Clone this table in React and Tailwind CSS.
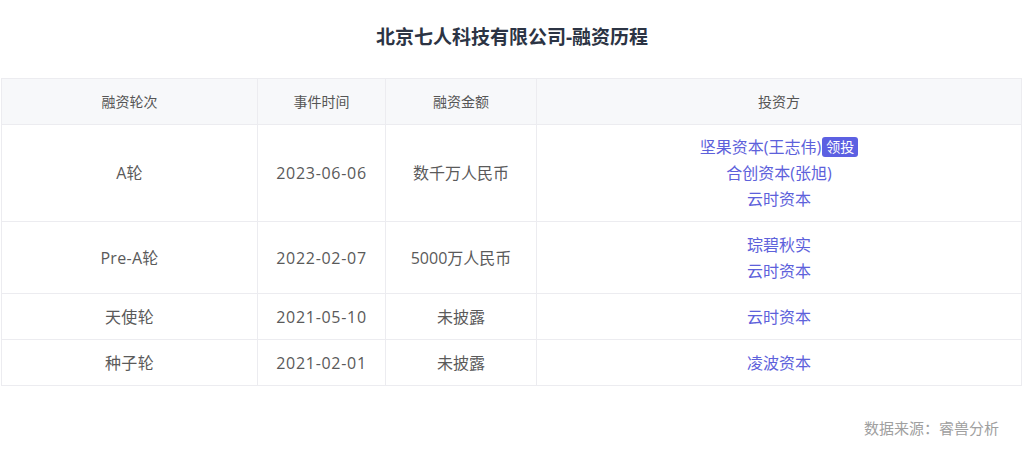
import React from "react";

const ROWS = [
  {
    round: "A轮",
    date: "2023-06-06",
    amount: "数千万人民币",
    h: "h-[97px]",
    investors: [
      { name: "坚果资本(王志伟)", lead: true },
      { name: "合创资本(张旭)" },
      { name: "云时资本" },
    ],
  },
  {
    round: "Pre-A轮",
    date: "2022-02-07",
    amount: "5000万人民币",
    h: "h-[72px]",
    investors: [{ name: "琮碧秋实" }, { name: "云时资本" }],
  },
  { round: "天使轮", date: "2021-05-10", amount: "未披露", h: "h-[46px]", investors: [{ name: "云时资本" }] },
  { round: "种子轮", date: "2021-02-01", amount: "未披露", h: "h-[46px]", investors: [{ name: "凌波资本" }] },
];

const FONT = { fontFamily: '"Open Sans", "Noto Sans CJK SC", sans-serif' };

export default function App() {
  return (
    <div className="w-[1024px] h-[470px] bg-white" style={FONT}>
      <h1 className="pt-[23px] h-[78px] text-center text-[19px] font-bold text-[#2c3444] leading-[28px]">
        北京七人科技有限公司-融资历程
      </h1>

      <table className="ml-px w-[1021px] border-collapse table-fixed">
        <colgroup>
          <col className="w-[256px]" />
          <col className="w-[128px]" />
          <col className="w-[151px]" />
          <col />
        </colgroup>
        <thead>
          <tr className="bg-[#f7f8fa] text-[14px] text-[#555] h-[46px]">
            {["融资轮次", "事件时间", "融资金额", "投资方"].map((h) => (
              <th key={h} className="font-normal border border-[#ececf0] text-center">
                {h}
              </th>
            ))}
          </tr>
        </thead>
        <tbody>
          {ROWS.map((r) => (
            <tr key={r.date} className={`text-[16px] text-[#5a5a5a] ${r.h}`}>
              <td className="border border-[#ececf0] text-center tracking-[0.3px]">{r.round}</td>
              <td className="border border-[#ececf0] text-center tracking-[0.7px]">{r.date}</td>
              <td className="border border-[#ececf0] text-center">{r.amount}</td>
              <td className="border border-[#ececf0] text-center py-[8px] leading-[26px] text-[#5d61db]">
                {r.investors.map((inv) => (
                  <div key={inv.name}>
                    {inv.name}
                    {inv.lead && (
                      <span className="ml-px inline-block px-[4px] rounded-[3px] bg-[#5c60e2] text-white text-[14px] leading-[20px] align-[1px]">
                        领投
                      </span>
                    )}
                  </div>
                ))}
              </td>
            </tr>
          ))}
        </tbody>
      </table>

      <div className="mt-[31px] pr-[25px] text-right text-[15px] text-[#a0a0a0]">
        数据来源：睿兽分析
      </div>
    </div>
  );
}
